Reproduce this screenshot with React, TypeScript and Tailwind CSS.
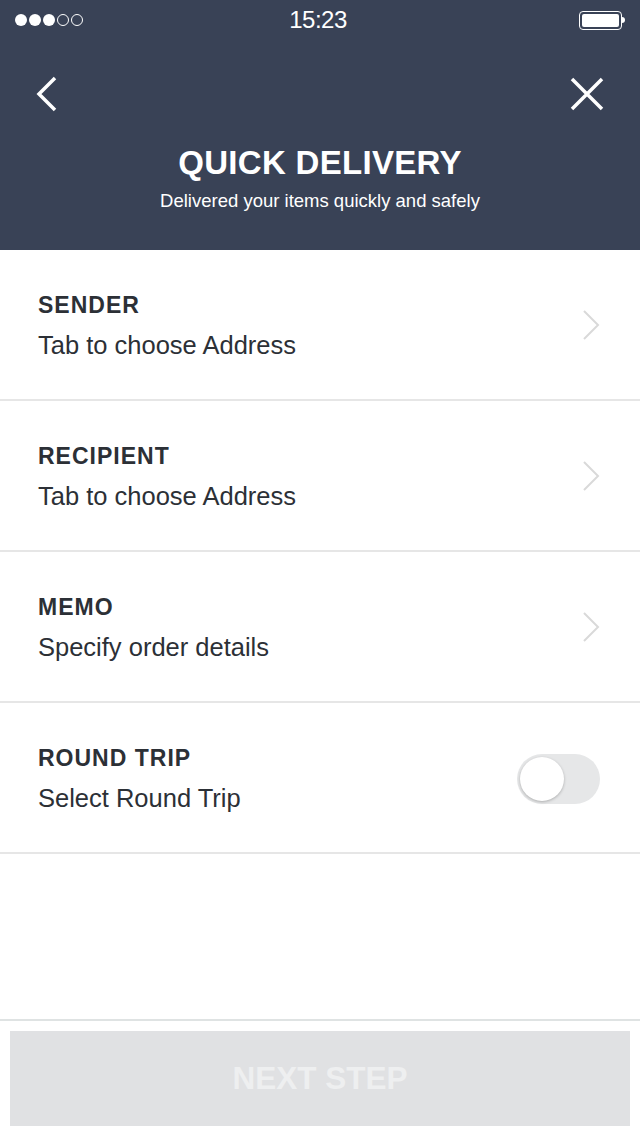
import React from "react";

const rows = [
  { title: "SENDER", sub: "Tab to choose Address" },
  { title: "RECIPIENT", sub: "Tab to choose Address" },
  { title: "MEMO", sub: "Specify order details" },
];

const Chevron = () => (
  <svg width="18" height="32" viewBox="0 0 18 32" fill="none" className="mr-[40px]">
    <path d="M2 2 L16 16 L2 30" stroke="#d9d9d9" strokeWidth="2" />
  </svg>
);

export default function App() {
  const [roundTrip, setRoundTrip] = React.useState(false);
  return (
    <div className="w-[640px] h-[1136px] flex flex-col bg-white font-['Liberation_Sans',Arial,sans-serif]">
      <div className="bg-[#394256] h-[250px] flex flex-col text-white">
        {/* status bar */}
        <div className="h-[40px] flex items-center justify-between px-[15px] relative">
          <div className="flex gap-[2px]">
            {[0, 1, 2].map((i) => (
              <span key={i} className="w-[12px] h-[12px] rounded-full bg-white" />
            ))}
            {[0, 1].map((i) => (
              <span key={i} className="w-[12px] h-[12px] rounded-full border border-white" />
            ))}
          </div>
          <span className="absolute left-[318px] -translate-x-1/2 text-[24px] tracking-[-0.5px]">15:23</span>
          <div className="flex items-center">
            <div className="w-[43px] h-[19px] rounded-[4px] border border-white p-[2px]">
              <div className="w-full h-full bg-white rounded-[2px]" />
            </div>
            <div className="w-[3px] h-[6px] bg-white rounded-r-sm" />
          </div>
        </div>
        {/* nav */}
        <div className="h-[103px] flex items-center justify-between px-[36px] pt-[5px]">
          <svg width="22" height="36" viewBox="0 0 22 36" fill="none">
            <path d="M19 2 L3 18 L19 34" stroke="white" strokeWidth="3.5" />
          </svg>
          <svg width="34" height="34" viewBox="0 0 34 34" fill="none">
            <path d="M2 2 L32 32 M32 2 L2 32" stroke="white" strokeWidth="3.5" />
          </svg>
        </div>
        <div className="flex flex-col items-center">
          <h1 className="text-[33px] font-black leading-[40px] tracking-[0.3px]">QUICK DELIVERY</h1>
          <p className="text-[18.5px] leading-[22px] mt-[7px]">Delivered your items quickly and safely</p>
        </div>
      </div>

      {rows.map((r) => (
        <div key={r.title} className="h-[151px] border-b-2 border-[#e6e6e6] flex items-center justify-between pl-[38px]">
          <div className="flex flex-col pt-[2px]">
            <span className="text-[23px] font-bold text-[#2c3036] tracking-[1px] leading-[26px]">{r.title}</span>
            <span className="text-[25.5px] text-[#2c3036] leading-[30px] mt-[12px]">{r.sub}</span>
          </div>
          <Chevron />
        </div>
      ))}
      <div className="h-[151px] border-b-2 border-[#e6e6e6] flex items-center justify-between pl-[38px]">
        <div className="flex flex-col pt-[2px]">
          <span className="text-[23px] font-bold text-[#2c3036] tracking-[1px] leading-[26px]">ROUND TRIP</span>
          <span className="text-[25.5px] text-[#2c3036] leading-[30px] mt-[12px]">Select Round Trip</span>
        </div>
        <button
          onClick={() => setRoundTrip(!roundTrip)}
          className={`mr-[40px] mt-[2px] w-[83px] h-[50px] rounded-full p-[3px] flex ${roundTrip ? "bg-[#4cd964] justify-end" : "bg-[#e6e7e8] justify-start"}`}
        >
          <span className="w-[44px] h-[44px] rounded-full bg-white shadow-[0_1px_3px_rgba(0,0,0,0.25)]" />
        </button>
      </div>

      <div className="flex-1" />
      <div className="border-t-2 border-[#dfe3e3] px-[10px] pt-[10px] pb-[10px]">
        <button className="w-full h-[95px] bg-[#e0e1e3] text-[#eeeff0] text-[31.5px] font-bold">NEXT STEP</button>
      </div>
    </div>
  );
}
